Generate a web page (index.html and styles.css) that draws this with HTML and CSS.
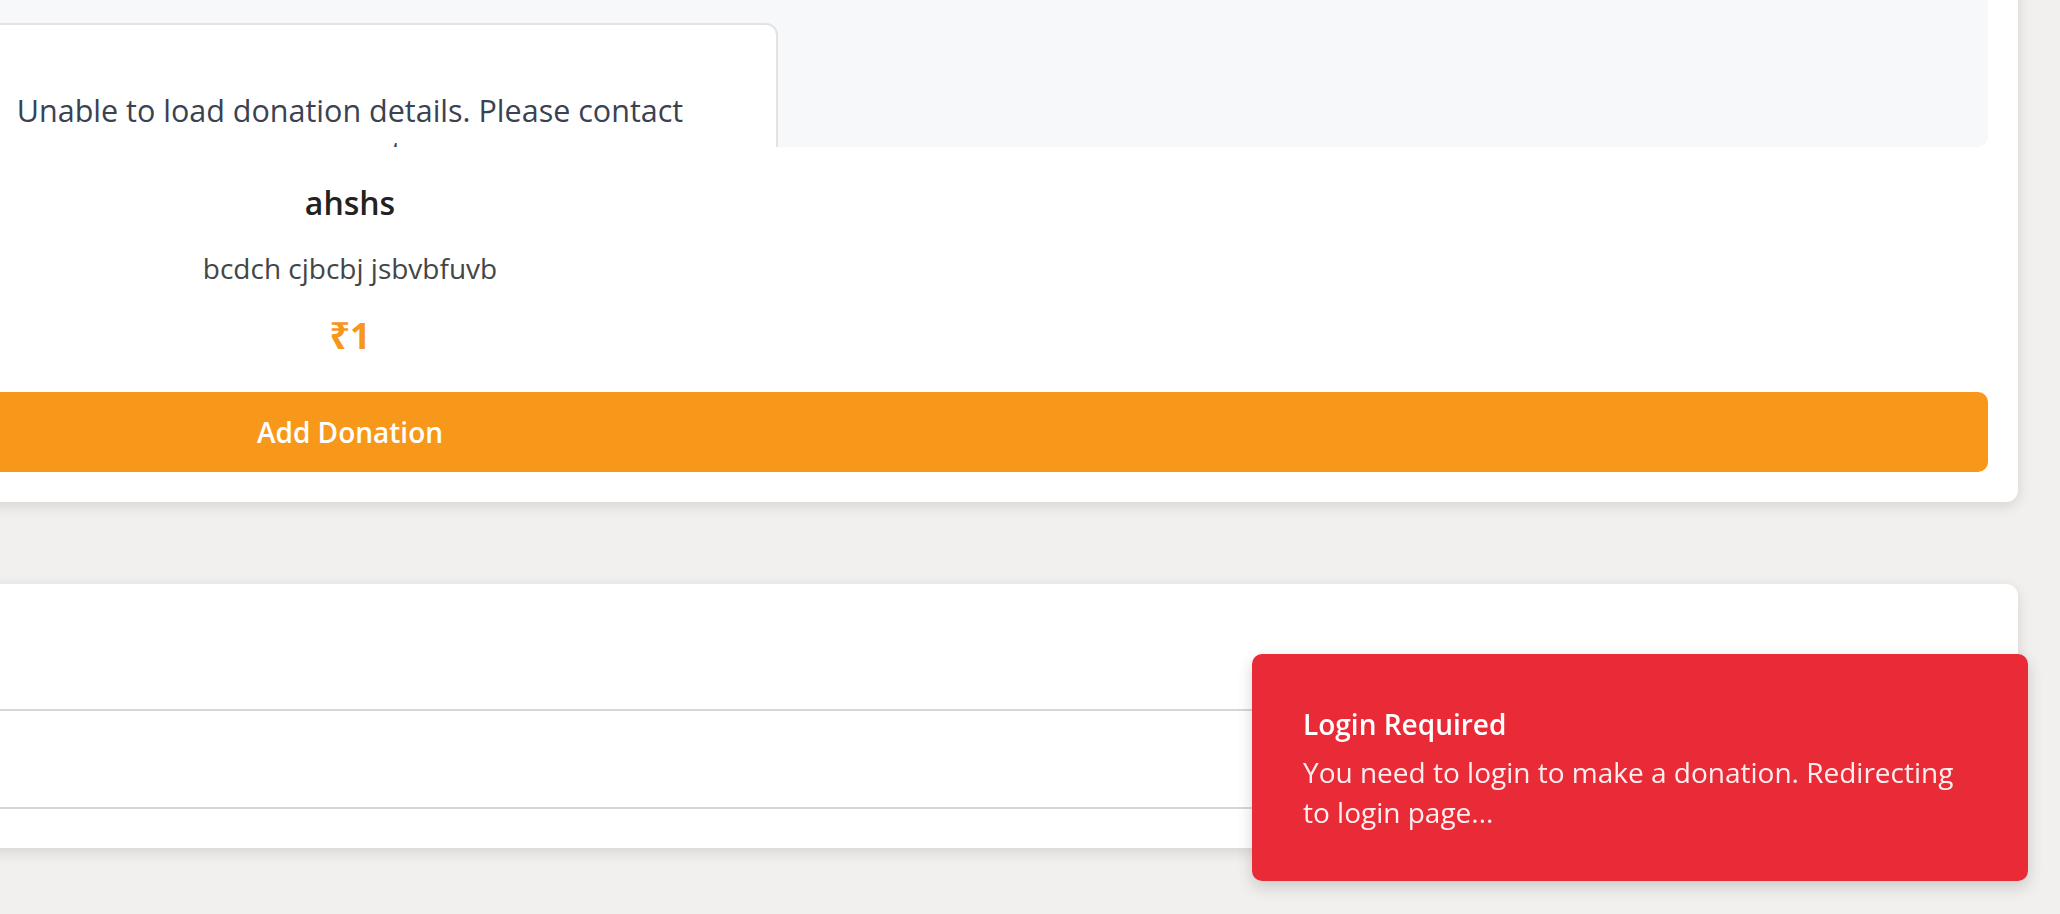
FILE: index.html
```html
<!DOCTYPE html>
<html lang="en">
<head>
<meta charset="utf-8">
<title>Donation</title>
<link rel="stylesheet" href="styles.css">
</head>
<body>
<main class="page">
  <section class="card donation-card">
    <div class="media">
      <div class="fallback">
        <p class="fallback-text">Unable to load donation details. Please contact support.</p>
      </div>
    </div>
    <div class="info">
      <h2 class="title">ahshs</h2>
      <p class="desc">bcdch cjbcbj jsbvbfuvb</p>
      <p class="price">₹1</p>
    </div>
    <button class="add-btn" type="button"><span class="add-label">Add Donation</span></button>
  </section>

  <section class="card list-card">
    <div class="list-head"></div>
    <div class="list-row"></div>
    <div class="list-foot"></div>
  </section>
</main>

<div class="toast" role="alert">
  <div class="toast-title">Login Required</div>
  <div class="toast-body">You need to login to make a donation. Redirecting to login page...</div>
</div>
</body>
</html>
```
FILE: styles.css
```css
* { box-sizing: border-box; }

html, body {
  margin: 0;
  padding: 0;
  height: 100%;
  overflow: hidden;
}

body {
  background: #f1f0ee;
  font-family: "Open Sans", "Noto Sans", sans-serif;
  color: #222;
}

.page {
  display: flex;
  flex-direction: column;
  gap: 82px;
  margin-left: -108px;
  margin-top: -60px;
  width: 2126px;
}

.card {
  background: #fff;
  border-radius: 12px;
  box-shadow: 0 4px 14px rgba(0, 0, 0, 0.12);
}

.donation-card {
  padding: 30px;
  display: flex;
  flex-direction: column;
}

.media {
  background: #f7f8fa;
  height: 177px;
  border-radius: 10px;
  overflow: hidden;
  padding-top: 53px;
}

.fallback {
  width: 856px;
  height: 300px;
  background: #fff;
  border: 2px solid #e3e3e5;
  border-radius: 12px;
  padding-top: 64px;
}

.fallback-text {
  margin: 0 auto;
  width: 720px;
  text-align: center;
  font-size: 30.5px;
  line-height: 42px;
  color: #3a4252;
}

.info {
  width: 856px;
  text-align: center;
  padding-top: 36px;
}

.title {
  margin: 0;
  font-size: 32px;
  line-height: 40px;
  font-weight: 600;
  color: #222;
}

.desc {
  margin: 27px 0 0;
  font-size: 28px;
  line-height: 36px;
  color: #454545;
}

.price {
  margin: 28px 0 0;
  font-size: 36px;
  line-height: 44px;
  font-weight: 700;
  color: #f7971a;
}

.add-btn {
  margin-top: 34px;
  height: 80px;
  border: 0;
  border-radius: 10px;
  background: #f7981a;
  padding: 0;
  text-align: left;
  font-family: inherit;
  cursor: pointer;
}

.add-label {
  display: block;
  width: 856px;
  text-align: center;
  color: #fff;
  font-size: 28px;
  line-height: 36px;
  font-weight: 600;
}

.list-card {
  height: 264px;
  padding: 0 30px 0 0;
  display: flex;
  flex-direction: column;
}

.list-head {
  height: 127px;
  border-bottom: 2px solid #d6d6d6;
}

.list-row {
  height: 98px;
  border-bottom: 2px solid #d6d6d6;
}

.list-foot {
  flex: 1;
}

.toast {
  position: fixed;
  right: 32px;
  bottom: 33px;
  width: 776px;
  height: 227px;
  background: #e92b37;
  border-radius: 10px;
  padding: 52px 51px 50px;
  box-shadow: 0 6px 16px rgba(0, 0, 0, 0.16);
  color: #fff;
}

.toast-title {
  font-size: 28px;
  line-height: 36px;
  font-weight: 600;
}

.toast-body {
  margin-top: 10px;
  font-size: 28px;
  line-height: 40px;
  color: rgba(255, 255, 255, 0.92);
}
```
